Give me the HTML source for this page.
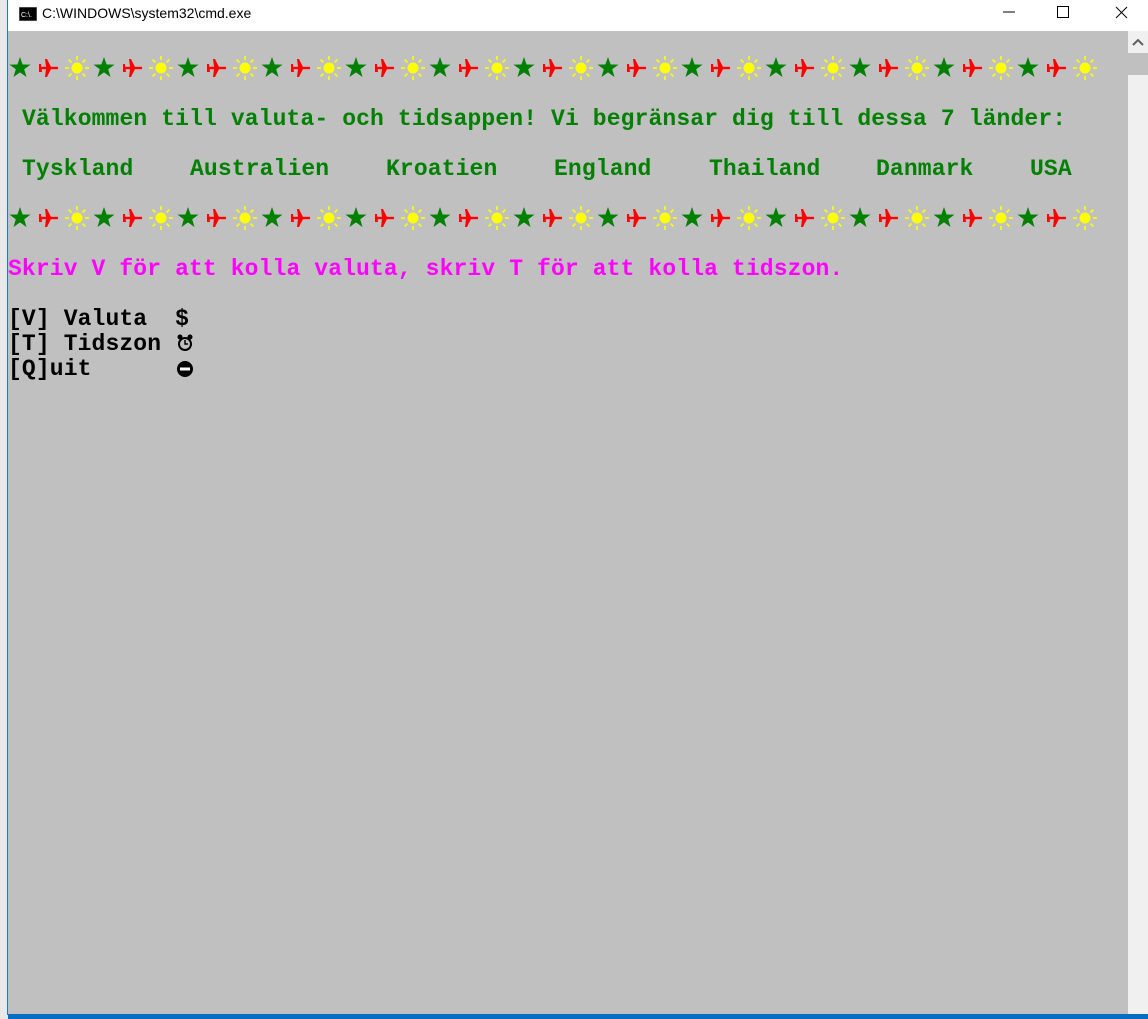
<!DOCTYPE html>
<html><head><meta charset="utf-8"><style>
*{margin:0;padding:0}
body{width:1148px;height:1019px;overflow:hidden;background:#0a6cc0;position:relative;font-family:"Liberation Mono",monospace}
#left{position:absolute;left:0;top:0;width:8px;height:1019px;background:#e8e8e8}
#title{position:absolute;left:7px;top:0;width:1141px;height:31px;background:#fff}
#title .t{position:absolute;left:35px;top:5px;font:14px "Liberation Sans",sans-serif;color:#000}
#con{position:absolute;left:8px;top:31px;width:1120px;height:983px;background:#c0c0c0}
#border{position:absolute;left:7px;top:0;width:1px;height:1015px;background:#1979ca}
#sb{position:absolute;left:1128px;top:31px;width:20px;height:983px;background:#f0f0f0}
.tx{position:absolute;font-size:23px;line-height:25px;white-space:pre;font-weight:bold;letter-spacing:0.12px}
.g{color:#008000}.m{color:#ff00ff}.k{color:#000}
</style></head><body>
<div id="left"></div>
<div id="title">
<svg style="position:absolute;left:12px;top:7px" width="18" height="14"><rect x="0" y="0" width="18" height="14" fill="#000" stroke="#888"/><text x="2" y="10" font-size="7" fill="#fff" font-family="Liberation Sans">C:\.</text></svg>
<div class="t">C:\WINDOWS\system32\cmd.exe</div>
<svg style="position:absolute;left:990px;top:4px" width="150" height="20">
<line x1="6" y1="8" x2="18" y2="8" stroke="#000"/>
<rect x="60.5" y="2.5" width="11" height="11" fill="none" stroke="#000"/>
<line x1="119" y1="3" x2="130" y2="14" stroke="#000"/><line x1="130" y1="3" x2="119" y2="14" stroke="#000"/>
</svg>
</div>
<div id="border"></div>
<div id="con">
<svg width="1120" height="250" style="position:absolute;left:0;top:0">
<defs>
<g id="st"><polygon points="0,-11 2.6,-3.5 10.5,-3.4 4.2,1.3 6.5,9 0,4.4 -6.5,9 -4.2,1.3 -10.5,-3.4 -2.6,-3.5" fill="#008000"/></g>
<g id="pl" fill="#ff0000"><rect x="-8" y="-1.2" width="18" height="2.4"/><polygon points="-2,-1 3,-1 -1,-9 -3,-9"/><polygon points="-2,1 3,1 -1,9 -3,9"/><polygon points="-9,-4 -7,-4 -6,4 -9,4"/></g>
<g id="su" stroke="#ffff00" stroke-width="1.6"><circle r="5.5" fill="#ffff00" stroke="none"/><line x1="0" y1="-8" x2="0" y2="-12"/><line x1="0" y1="8" x2="0" y2="12"/><line x1="-8" y1="0" x2="-12" y2="0"/><line x1="8" y1="0" x2="12" y2="0"/><line x1="5.6" y1="-5.6" x2="8.4" y2="-8.4"/><line x1="-5.6" y1="-5.6" x2="-8.4" y2="-8.4"/><line x1="5.6" y1="5.6" x2="8.4" y2="8.4"/><line x1="-5.6" y1="5.6" x2="-8.4" y2="8.4"/></g>
<pattern id="pt" x="0" y="22" width="84" height="30" patternUnits="userSpaceOnUse">
<use href="#st" x="12" y="15"/><use href="#pl" x="40" y="15"/><use href="#su" x="69" y="15"/>
</pattern>
</defs>
<rect x="0" y="22" width="1092" height="30" fill="url(#pt)"/>
<rect x="0" y="172" width="1092" height="30" fill="url(#pt)"/>
</svg>
<div class="tx g" style="left:14px;top:76px">Välkommen till valuta- och tidsappen! Vi begränsar dig till dessa 7 länder:</div>
<div class="tx g" style="left:14px;top:126px">Tyskland</div>
<div class="tx g" style="left:182px;top:126px">Australien</div>
<div class="tx g" style="left:378px;top:126px">Kroatien</div>
<div class="tx g" style="left:546px;top:126px">England</div>
<div class="tx g" style="left:701px;top:126px">Thailand</div>
<div class="tx g" style="left:868px;top:126px">Danmark</div>
<div class="tx g" style="left:1022px;top:126px">USA</div>
<div class="tx m" style="left:0;top:226px">Skriv V för att kolla valuta, skriv T för att kolla tidszon.</div>
<div class="tx k" style="left:0;top:276px">[V] Valuta  $
[T] Tidszon
[Q]uit</div>
<svg style="position:absolute;left:168px;top:302px" width="20" height="20"><circle cx="9" cy="11" r="6" fill="none" stroke="#000" stroke-width="2"/><path d="M9,7 V11 H12" stroke="#000" stroke-width="1.5" fill="none"/><circle cx="4" cy="4" r="2.5" fill="#000"/><circle cx="14" cy="4" r="2.5" fill="#000"/></svg>
<svg style="position:absolute;left:168px;top:328px" width="20" height="20"><circle cx="9" cy="10" r="8" fill="#000"/><rect x="4" y="8.5" width="10" height="3" fill="#fff"/></svg>
</div>
<div id="sb"><svg width="20" height="60"><path d="M5,14 L10,9 L15,14" stroke="#606060" stroke-width="2" fill="none"/><rect x="0" y="22" width="20" height="22" fill="#c0c0c0"/></svg></div>
</body></html>
